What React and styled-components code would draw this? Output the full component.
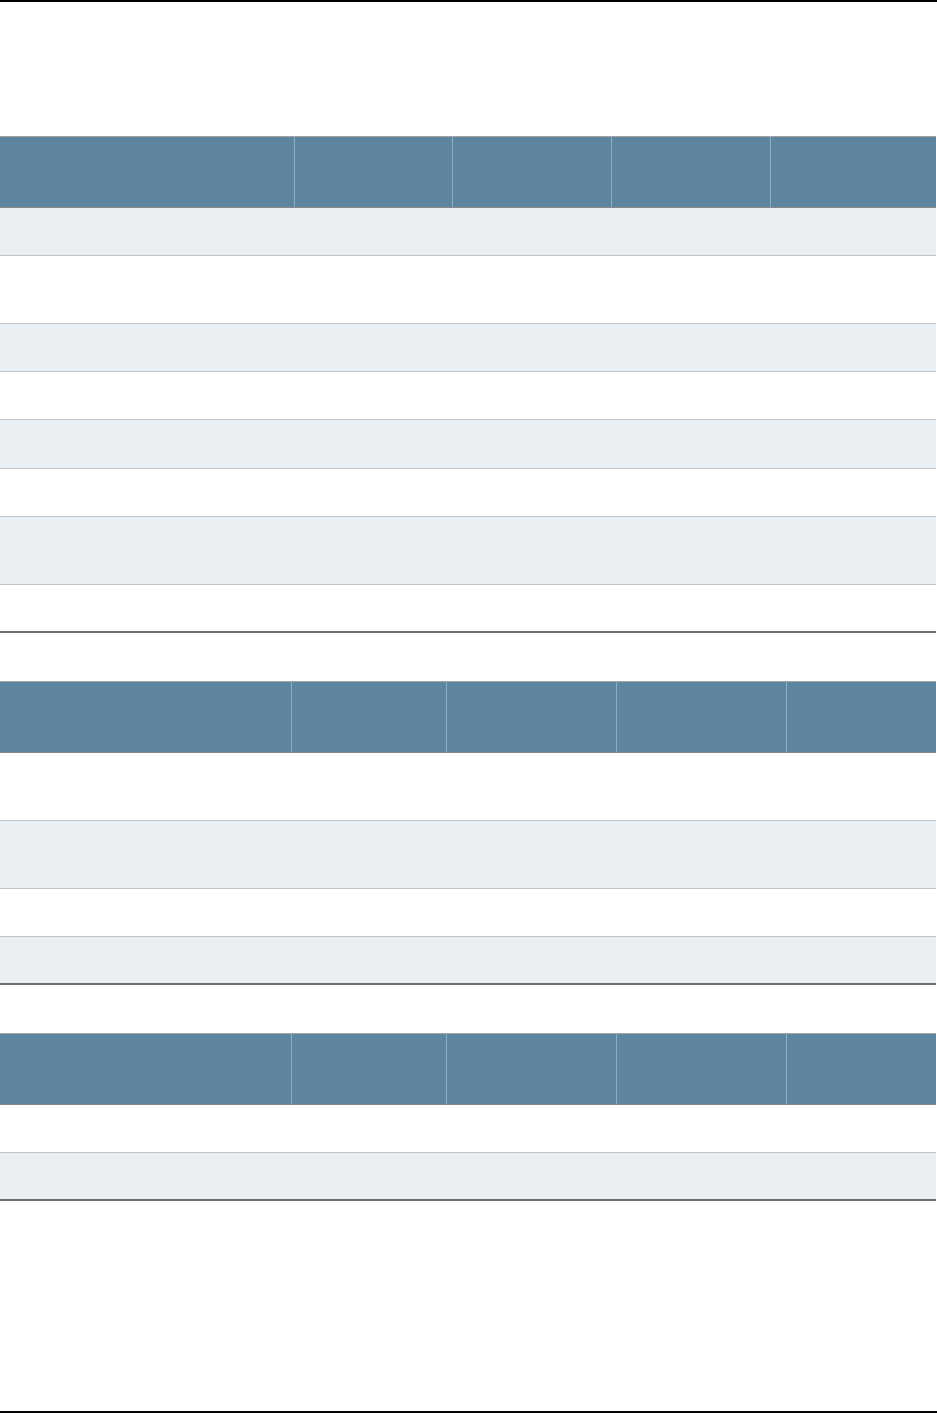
import React from 'react';
import styled, { createGlobalStyle } from 'styled-components';

const GlobalStyle = createGlobalStyle`
  html, body {
    margin: 0;
    padding: 0;
    background: #fff;
    font-family: "Liberation Sans", Arial, sans-serif;
  }
`;

const Page = styled.div`
  box-sizing: border-box;
  width: 937px;
  height: 1413px;
  border-top: 2px solid #000;
  border-bottom: 2px solid #000;
  padding-top: 134px;
  display: flex;
  flex-direction: column;
  gap: 48px;
`;

const Table = styled.div`
  width: 936px;
  display: flex;
  flex-direction: column;
`;

const HeadRow = styled.div`
  box-sizing: border-box;
  height: 72px;
  display: grid;
  grid-template-columns: ${(p) => p.cols};
  background: #5d859f;
  border-top: 1px solid #a2a2a2;
  border-bottom: 1px solid #8a8a8a;
`;

const HeadCell = styled.div`
  box-sizing: border-box;
  border-left: ${(p) => (p.first ? 'none' : '1px solid #90acbf')};
  color: #fff;
  font-size: 13px;
  font-weight: bold;
`;

const BodyRow = styled.div`
  box-sizing: border-box;
  height: ${(p) => p.h}px;
  display: grid;
  grid-template-columns: ${(p) => p.cols};
  background: ${(p) => (p.shaded ? '#eaeff3' : '#fff')};
  border-bottom: ${(p) => (p.last ? '2px solid #6f6f6f' : '1px solid #c4c4c4')};
`;

const Cell = styled.div`
  font-size: 13px;
  color: #333;
`;

const tables = [
  {
    cols: '294px 158px 159px 159px 166px',
    rows: [48, 68, 48, 48, 49, 48, 68, 48],
    shadeFirst: true,
  },
  {
    cols: '291px 155px 170px 170px 150px',
    rows: [68, 68, 48, 48],
    shadeFirst: false,
  },
  {
    cols: '291px 155px 170px 170px 150px',
    rows: [48, 48],
    shadeFirst: false,
  },
];

function DataTable({ cols, rows, shadeFirst }) {
  return (
    <Table>
      <HeadRow cols={cols}>
        {[0, 1, 2, 3, 4].map((i) => (
          <HeadCell key={i} first={i === 0} />
        ))}
      </HeadRow>
      {rows.map((h, r) => (
        <BodyRow
          key={r}
          h={h}
          cols={cols}
          shaded={shadeFirst ? r % 2 === 0 : r % 2 === 1}
          last={r === rows.length - 1}
        >
          {[0, 1, 2, 3, 4].map((i) => (
            <Cell key={i} />
          ))}
        </BodyRow>
      ))}
    </Table>
  );
}

export default function App() {
  return (
    <>
      <GlobalStyle />
      <Page>
        {tables.map((t, i) => (
          <DataTable key={i} {...t} />
        ))}
      </Page>
    </>
  );
}
